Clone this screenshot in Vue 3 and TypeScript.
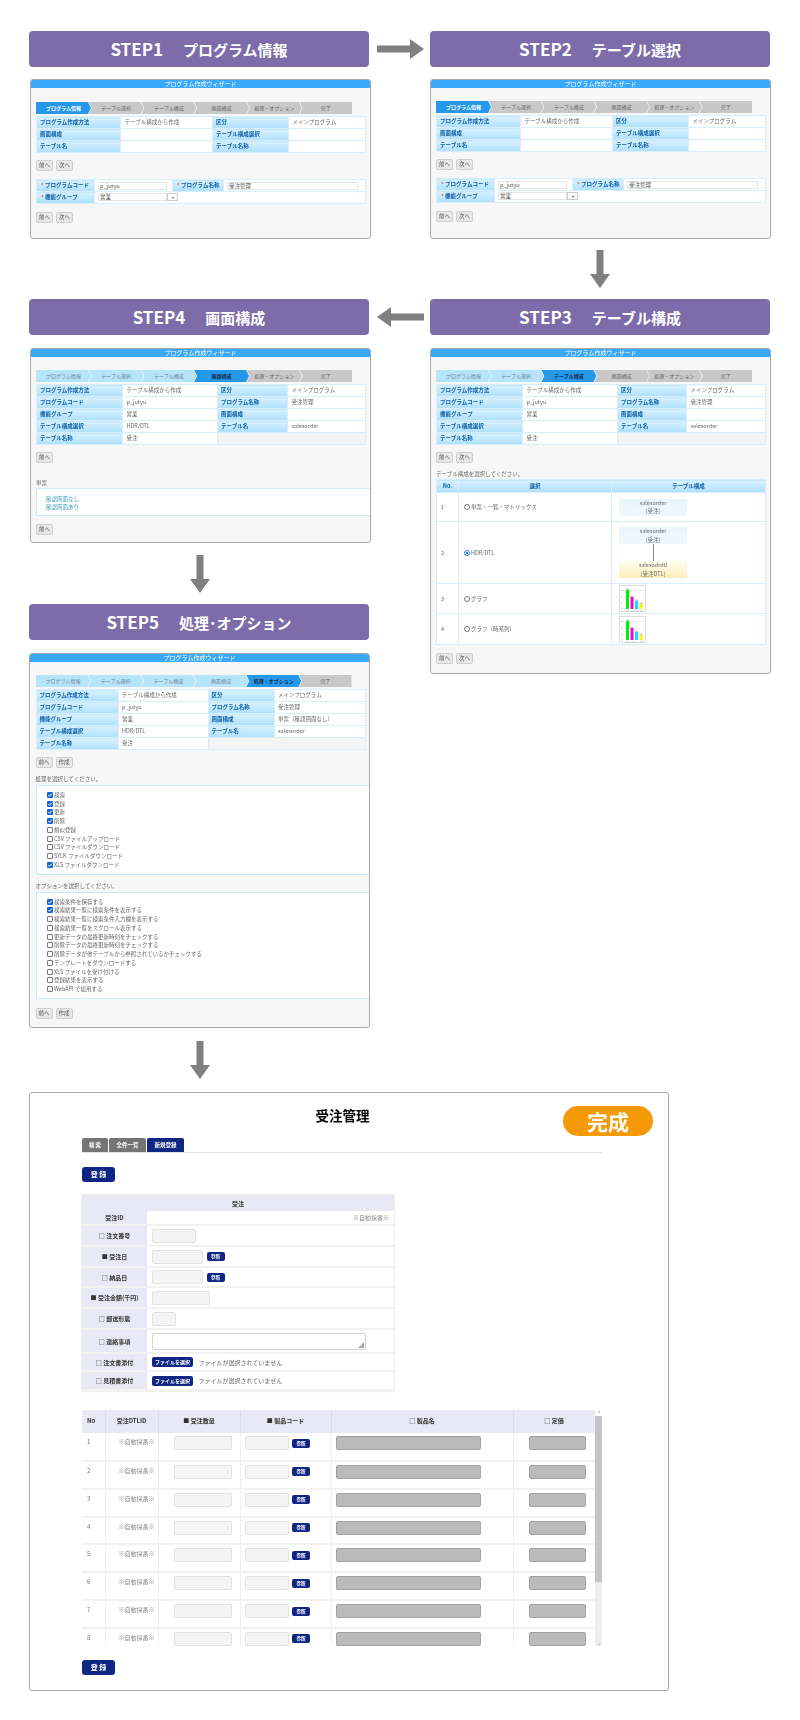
<script setup lang="ts">
interface Check { label: string; on: boolean }
interface Wizard {
  id: number
  heading: string
  current: number
  cols: number[]
  info: string[][]
  action: string
}

const stepNames = ['プログラム情報', 'テーブル選択', 'テーブル構成', '画面構成', '処理・オプション', '完了']

const early: string[][] = [
  ['プログラム作成方法', 'テーブル構成から作成', '区分', 'メインプログラム'],
  ['画面構成', '', 'テーブル構成選択', ''],
  ['テーブル名', '', 'テーブル名称', '']
]
const late = (screen: string, struct: string): string[][] => [
  ['プログラム作成方法', 'テーブル構成から作成', '区分', 'メインプログラム'],
  ['プログラムコード', 'p_jutyu', 'プログラム名称', '受注管理'],
  ['機能グループ', '営業', '画面構成', screen],
  ['テーブル構成選択', struct, 'テーブル名', 'salesorder'],
  ['テーブル名称', '受注']
]

const wizards: Wizard[] = [
  { id: 1, heading: 'プログラム情報', current: 0, cols: [84, 92, 76, 77], info: early, action: '次へ' },
  { id: 2, heading: 'テーブル選択', current: 0, cols: [84, 92, 76, 77], info: early, action: '次へ' },
  { id: 3, heading: 'テーブル構成', current: 2, cols: [86, 95, 69, 79], info: late('', ''), action: '次へ' },
  { id: 4, heading: '画面構成', current: 3, cols: [86, 95, 70, 78], info: late('', 'HDR/DTL'), action: '' },
  { id: 5, heading: '処理･オプション', current: 4, cols: [82, 90, 66, 91], info: late('単票（確認画面なし）', 'HDR/DTL'), action: '作成' }
]

const structures = [
  { no: 1, label: '単票・一覧・マトリックス', kind: 'single', on: false, h: 29 },
  { no: 2, label: 'HDR/DTL', kind: 'pair', on: true, h: 62 },
  { no: 3, label: 'グラフ', kind: 'graph', on: false, h: 30 },
  { no: 4, label: 'グラフ（時系列）', kind: 'graph', on: false, h: 31 }
]

const processes: Check[] = [
  { label: '検索', on: true },
  { label: '登録', on: true },
  { label: '更新', on: true },
  { label: '削除', on: true },
  { label: '類似登録', on: false },
  { label: 'CSV ファイルアップロード', on: false },
  { label: 'CSV ファイルダウンロード', on: false },
  { label: 'SYLK ファイルダウンロード', on: false },
  { label: 'XLS ファイルダウンロード', on: true }
]
const options: Check[] = [
  { label: '検索条件を保存する', on: true },
  { label: '検索結果一覧に検索条件を表示する', on: true },
  { label: '検索結果一覧に検索条件入力欄を表示する', on: false },
  { label: '検索結果一覧をスクロール表示する', on: false },
  { label: '更新データの最終更新時刻をチェックする', on: false },
  { label: '削除データの最終更新時刻をチェックする', on: false },
  { label: '削除データが他テーブルから参照されているかチェックする', on: false },
  { label: 'テンプレートをダウンロードする', on: false },
  { label: 'XLS ファイルを受け付ける', on: false },
  { label: '登録結果を表示する', on: false },
  { label: 'WebAPI で使用する', on: false }
]
const checkGroups = [
  { title: '処理を選択してください。', items: processes },
  { title: 'オプションを選択してください。', items: options }
]

const formRows = [
  { label: '受注ID', h: 14, kind: 'auto', input: 0 },
  { label: '□ 注文番号', h: 21, kind: 'input', input: 44 },
  { label: '■ 受注日', h: 21, kind: 'ref', input: 51 },
  { label: '□ 納品日', h: 20, kind: 'ref', input: 51 },
  { label: '■ 受注金額(千円)', h: 21, kind: 'input', input: 58 },
  { label: '□ 郵送形態', h: 21, kind: 'input', input: 24 },
  { label: '□ 連絡事項', h: 24, kind: 'area', input: 0 },
  { label: '□ 注文書添付', h: 18, kind: 'file', input: 0 },
  { label: '□ 見積書添付', h: 19, kind: 'file', input: 0 }
]

const detailCols = [23, 53, 82, 91, 182, 82]
const detailRows = [1, 2, 3, 4, 5, 6, 7, 8]
</script>

<template>
  <main class="page">
    <div class="flow">
      <section v-for="w in wizards" :key="w.id" class="sec" :class="`sec-${w.id}`">
        <h2 class="heading"><span class="heading-no">STEP{{ w.id }}</span>　{{ w.heading }}</h2>

        <div class="wizard">
          <div class="wizard-title">プログラム作成ウィザード</div>
          <div class="wizard-body">
            <ol class="crumbs">
              <li
                v-for="(name, i) in stepNames"
                :key="name"
                class="crumb"
                :class="{ done: i < w.current, now: i === w.current, first: i === 0, last: i === 5, white: w.current === 0 }"
              >{{ name }}</li>
            </ol>

            <table class="info">
              <colgroup><col v-for="(c, i) in w.cols" :key="i" :style="{ width: c + 'px' }" /></colgroup>
              <tbody>
                <tr v-for="(row, r) in w.info" :key="r">
                  <template v-for="(cell, c) in row" :key="c">
                    <th v-if="c % 2 === 0">{{ cell }}</th>
                    <td v-else>{{ cell }}</td>
                  </template>
                  <td v-if="row.length === 2" colspan="2" class="blank"></td>
                </tr>
              </tbody>
            </table>

            <div class="btns"><span class="btn">前へ</span><span v-if="w.action" class="btn">{{ w.action }}</span></div>

            <template v-if="w.id <= 2">
              <table class="info basics">
                <colgroup>
                  <col style="width: 58px" /><col style="width: 78px" /><col style="width: 51px" /><col style="width: 142px" />
                </colgroup>
                <tbody>
                  <tr>
                    <th><i>*</i> プログラムコード</th>
                    <td><span class="field short">p_jutyu</span></td>
                    <th><i>*</i> プログラム名称</th>
                    <td><span class="field wide">受注管理</span></td>
                  </tr>
                  <tr>
                    <th><i>*</i> 機能グループ</th>
                    <td colspan="3">
                      <span class="select"><span class="field short">営業</span><span class="select-btn">▾</span></span>
                    </td>
                  </tr>
                </tbody>
              </table>
              <div class="btns after"><span class="btn">前へ</span><span class="btn">次へ</span></div>
            </template>

            <template v-if="w.id === 3">
              <p class="prompt">テーブル構成を選択してください。</p>
              <table class="structs">
                <colgroup><col style="width: 22px" /><col style="width: 153px" /><col style="width: 154px" /></colgroup>
                <thead><tr><th>No.</th><th>選択</th><th>テーブル構成</th></tr></thead>
                <tbody>
                  <tr v-for="s in structures" :key="s.no" :style="{ height: s.h + 'px' }">
                    <td class="no">{{ s.no }}</td>
                    <td><span class="radio" :class="{ on: s.on }"></span>{{ s.label }}</td>
                    <td class="diagram">
                      <template v-if="s.kind !== 'graph'">
                        <div class="tbl">salesorder<br />[受注]</div>
                        <template v-if="s.kind === 'pair'">
                          <div class="link"></div>
                          <div class="tbl dtl">salesodrdtl<br />[受注DTL]</div>
                        </template>
                      </template>
                      <svg v-else class="thumb" viewBox="0 0 27 27" width="27" height="27">
                        <rect x="0.5" y="0.5" width="26" height="26" fill="#fff" stroke="#ddd" />
                        <path d="M5 5.5H25M5 12H25M5 18H25" stroke="#e6e6e6" stroke-width="0.6" />
                        <path d="M2 5.5H4M2 12H4M2 18H4M2 24H4M7 26H10M12 26H15M16 26H19M21 26H24" stroke="#bbb" stroke-width="0.8" />
                        <rect x="7" y="3.5" width="3" height="1.6" fill="#ccc" />
                        <rect x="7" y="5" width="3" height="19" fill="#00f000" />
                        <rect x="11.5" y="10.5" width="3" height="1.6" fill="#ccc" />
                        <rect x="11.5" y="12" width="3" height="12" fill="#f000e8" />
                        <rect x="16" y="14.5" width="3" height="1.6" fill="#ccc" />
                        <rect x="16" y="16" width="3" height="8" fill="#00e8f8" />
                        <rect x="20.5" y="17.5" width="3" height="1.6" fill="#ccc" />
                        <rect x="20.5" y="19" width="3" height="5" fill="#f8f800" />
                      </svg>
                    </td>
                  </tr>
                </tbody>
              </table>
              <div class="btns after"><span class="btn">前へ</span><span class="btn">次へ</span></div>
            </template>

            <template v-if="w.id === 4">
              <p class="prompt far">単票</p>
              <div class="choices links">
                <a>確認画面なし</a>
                <a>確認画面あり</a>
              </div>
              <div class="btns after"><span class="btn">前へ</span></div>
            </template>

            <template v-if="w.id === 5">
              <template v-for="g in checkGroups" :key="g.title">
                <p class="prompt">{{ g.title }}</p>
                <ul class="choices checks">
                  <li v-for="item in g.items" :key="item.label">
                    <span class="check" :class="{ on: item.on }">
                      <svg v-if="item.on" viewBox="0 0 6 6" width="6" height="6"><path d="M1.3 3.1 2.5 4.3 4.8 1.7" fill="none" stroke="#fff" stroke-width="1" /></svg>
                    </span>{{ item.label }}
                  </li>
                </ul>
              </template>
              <div class="btns after"><span class="btn">前へ</span><span class="btn">作成</span></div>
            </template>
          </div>
        </div>
      </section>

      <div class="arrow a-right">
        <svg width="47" height="20" viewBox="0 0 47 20"><path d="M0 6.5H33V0L47 10 33 20V13.5H0Z" fill="#808080" /></svg>
      </div>
      <div class="arrow a-down-1">
        <svg width="20" height="38" viewBox="0 0 20 38"><path d="M6.5 0H13.5V24H20L10 38 0 24H6.5Z" fill="#808080" /></svg>
      </div>
      <div class="arrow a-left">
        <svg width="47" height="20" viewBox="0 0 47 20"><path d="M47 6.5H14V0L0 10 14 20V13.5H47Z" fill="#808080" /></svg>
      </div>
      <div class="arrow a-down-2">
        <svg width="20" height="38" viewBox="0 0 20 38"><path d="M6.5 0H13.5V24H20L10 38 0 24H6.5Z" fill="#808080" /></svg>
      </div>
      <div class="arrow a-down-3">
        <svg width="20" height="38" viewBox="0 0 20 38"><path d="M6.5 0H13.5V24H20L10 38 0 24H6.5Z" fill="#808080" /></svg>
      </div>
    </div>

    <section class="result">
      <div class="badge">完成</div>
      <h1 class="result-title">受注管理</h1>
      <nav class="tabs">
        <span class="tab tab-a">検 索</span>
        <span class="tab tab-b">全件一覧</span>
        <span class="tab tab-c active">新規登録</span>
      </nav>
      <span class="primary">登 録</span>

      <table class="form">
        <colgroup><col style="width: 65px" /><col /></colgroup>
        <thead><tr><th colspan="2">受注</th></tr></thead>
        <tbody>
          <tr v-for="f in formRows" :key="f.label" :style="{ height: f.h + 'px' }">
            <th>{{ f.label }}</th>
            <td>
              <div v-if="f.kind === 'auto'" class="auto">※自動採番※</div>
              <div v-else-if="f.kind === 'input' || f.kind === 'ref'" class="cell-row">
                <span class="inp" :style="{ width: f.input + 'px' }"></span>
                <span v-if="f.kind === 'ref'" class="ref">参照</span>
              </div>
              <div v-else-if="f.kind === 'area'" class="area">
                <svg viewBox="0 0 6 6" width="6" height="6"><path d="M6 0V6H0Z" fill="#aaa" /></svg>
              </div>
              <div v-else class="cell-row">
                <span class="file">ファイルを選択</span>
                <span class="file-note">ファイルが選択されていません</span>
              </div>
            </td>
          </tr>
        </tbody>
      </table>

      <div class="detail">
        <div class="detail-clip">
          <table class="lines">
            <colgroup><col v-for="(c, i) in detailCols" :key="i" :style="{ width: c + 'px' }" /></colgroup>
            <thead>
              <tr>
                <th class="th-no">No</th><th>受注DTLID</th><th>■ 受注数量</th><th>■ 製品コード</th><th>□ 製品名</th><th>□ 定価</th>
              </tr>
            </thead>
            <tbody>
              <tr v-for="n in detailRows" :key="n">
                <td class="td-no">{{ n }}</td>
                <td class="td-auto">※自動採番※</td>
                <td class="td-end"><span class="inp qty"></span></td>
                <td><div class="cell-row"><span class="inp code"></span><span class="ref">参照</span></div></td>
                <td><span class="inp locked name"></span></td>
                <td class="td-end price"><span class="inp locked cost"></span></td>
              </tr>
            </tbody>
          </table>
        </div>
        <div class="scrollbar">
          <span class="sb-arrow">⌃</span>
          <span class="sb-thumb"></span>
          <span class="sb-arrow down">⌄</span>
        </div>
      </div>

      <span class="primary last">登 録</span>
    </section>
  </main>
</template>

<style scoped>
.page {
  width: 800px;
  height: 1720px;
  box-sizing: border-box;
  padding: 31px 0 0 29px;
  background: #fff;
  font-family: "Noto Sans CJK JP", "Noto Sans", sans-serif;
  color: #666;
  overflow: hidden;
}
.flow {
  display: grid;
  grid-template-columns: 341px 60px 341px;
  grid-template-rows: 208px 60px 244px 61px 424px 64px;
}
.sec-1 { grid-area: 1 / 1; }
.sec-2 { grid-area: 1 / 3; }
.sec-3 { grid-area: 3 / 3 / 6 / 4; }
.sec-4 { grid-area: 3 / 1; }
.sec-5 { grid-area: 5 / 1; }
.arrow { display: flex; align-items: center; justify-content: center; }
.arrow svg { display: block; }
.a-right { grid-area: 1 / 2; height: 36px; }
.a-down-1 { grid-area: 2 / 3; padding-right: 2px; }
.a-left { grid-area: 3 / 2; height: 36px; }
.a-down-2 { grid-area: 4 / 1; }
.a-down-3 { grid-area: 6 / 1; }

.heading {
  margin: 0 0 12px;
  width: 340px;
  height: 36px;
  border-radius: 4px;
  background: #7d6ca9;
  color: #fff;
  font-size: 15px;
  font-weight: 700;
  line-height: 36px;
  text-align: center;
}
.sec-3 .heading, .sec-4 .heading, .sec-5 .heading { margin-bottom: 13px; }
.heading-no { margin-right: 5px; font-size: 17px; }

.wizard {
  margin-left: 1px;
  width: 341px;
  box-sizing: border-box;
  border: 1px solid #a8a8a8;
  border-radius: 3px;
  background: #f7f7f7;
  overflow: hidden;
  filter: blur(0.3px);
}
.sec-3 .wizard, .sec-2 .wizard, .sec-5 .wizard { margin-left: 0; }
.wizard-title {
  height: 8px;
  background: #3aa9fc;
  color: #fff;
  font-size: 6px;
  line-height: 8px;
  text-align: center;
}
.wizard-body { padding: 13px 5px 7px; }
.sec-1 .wizard-body { padding-top: 14px; padding-bottom: 15px; }
.sec-2 .wizard-body { padding-bottom: 16px; }
.sec-3 .wizard-body { padding-bottom: 9px; }
.sec-5 .wizard-body { padding-left: 5.5px; padding-bottom: 8px; }

.crumbs {
  display: flex;
  margin: 0;
  padding: 0;
  list-style: none;
  height: 12px;
}
.crumb {
  flex: none;
  width: 55px;
  margin-right: -2.3px;
  background: #c8c8c8;
  color: #666;
  font-size: 5px;
  line-height: 12px;
  text-align: center;
  clip-path: polygon(0 0, calc(100% - 3px) 0, 100% 50%, calc(100% - 3px) 100%, 0 100%, 3px 50%);
}
.crumb.first { clip-path: polygon(0 0, calc(100% - 3px) 0, 100% 50%, calc(100% - 3px) 100%, 0 100%); }
.crumb.last { width: 52.5px; clip-path: polygon(0 0, 100% 0, 100% 100%, 0 100%, 3px 50%); }
.crumb.done { background: #b6e4fb; color: #6f8591; }
.crumb.now { background: #2598ea; color: #13294b; font-weight: 700; }
.crumb.now.white { color: #fff; }

.info {
  margin-top: 2px;
  width: 329px;
  table-layout: fixed;
  border-collapse: collapse;
  font-size: 5.5px;
  line-height: 11px;
}
.info tr { height: 12px; }
.info th, .info td {
  padding: 0 0 0 3px;
  border: 1px solid #d8eefa;
  overflow: hidden;
  white-space: nowrap;
}
.info th {
  background: linear-gradient(#d8f1ff, #aee0fb);
  color: #0b5fa8;
  font-weight: 700;
  text-align: left;
}
.info td { padding-left: 3.5px; background: #fff; color: #666; }
.info td.blank { background: #f4f4f4; }
.basics { margin-top: 8px; }
.basics th { padding-left: 4px; }
.basics th i { color: #e8622a; font-style: normal; }
.basics td { padding: 0 0 0 3px; }
.field {
  display: inline-block;
  box-sizing: border-box;
  height: 8px;
  border: 1px solid #e4e4e4;
  background: #fff;
  color: #555;
  font-size: 5.5px;
  line-height: 6px;
  padding-left: 1px;
  vertical-align: middle;
}
.field.short { width: 69px; }
.field.wide { width: 131px; }
.select { display: inline-flex; align-items: center; }
.select-btn {
  width: 11px;
  height: 8px;
  box-sizing: border-box;
  border: 1px solid #ccc;
  background: #fff;
  color: #555;
  font-size: 4px;
  line-height: 6px;
  text-align: center;
}

.btns { display: flex; gap: 3px; margin-top: 7px; }
.btns.after { margin-top: 8px; }
.sec-5 .btns.after { margin-top: 9px; }
.btn {
  box-sizing: border-box;
  width: 17px;
  height: 11px;
  border: 1px solid #cfcfcf;
  border-radius: 2px;
  background: #e8e8e8;
  color: #555;
  font-size: 5.5px;
  line-height: 9px;
  text-align: center;
}

.prompt {
  margin: 7px 0 0;
  height: 9px;
  font-size: 5.5px;
  line-height: 9px;
  color: #666;
}
.prompt.far { margin-top: 16px; }
.structs {
  width: 329px;
  table-layout: fixed;
  border-collapse: collapse;
  background: #fff;
  font-size: 5.5px;
}
.structs th, .structs td { border: 1px solid #d8eefa; padding: 0; }
.structs th {
  height: 12px;
  background: linear-gradient(#d8f1ff, #aee0fb);
  color: #0b5fa8;
  line-height: 11px;
}
.structs td { padding-left: 5px; color: #666; }
.structs td.no { padding-left: 4px; }
.structs td.diagram { padding: 1px 0 1px 7px; vertical-align: middle; }
.radio {
  display: inline-block;
  box-sizing: border-box;
  width: 6px;
  height: 6px;
  margin-right: 1px;
  border: 1px solid #777;
  border-radius: 50%;
  background: #fff;
  vertical-align: -1px;
}
.radio.on { border: 1.5px solid #2b7de0; background: radial-gradient(#2b7de0 35%, #fff 40%); }
.tbl {
  width: 68px;
  height: 17px;
  background: linear-gradient(#e8f5fd, #f0f8fe);
  color: #666;
  font-size: 5.5px;
  line-height: 8.5px;
  text-align: center;
}
.tbl.dtl { background: linear-gradient(#fffdf0, #fdeeb8); }
.link { width: 1px; height: 17px; margin-left: 33.5px; background: #888; }
.thumb { display: block; }

.choices {
  margin: 0 -6px 0 0;
  box-sizing: border-box;
  border: 1px solid #c8eafa;
  border-right: none;
  background: #fff;
  list-style: none;
}
.links { height: 28px; padding: 6px 0 0 9px; }
.links a { display: block; height: 8px; color: #3c9ab5; font-size: 5.5px; line-height: 8px; }
.checks { margin-top: 1px; padding: 4.5px 0 4.5px 10.5px; }
.checks li {
  display: flex;
  align-items: center;
  height: 8.75px;
  color: #666;
  font-size: 5.5px;
  white-space: nowrap;
}
.check {
  flex: none;
  box-sizing: border-box;
  width: 6px;
  height: 6px;
  margin-right: 1px;
  border: 0.8px solid #777;
  border-radius: 1px;
  background: #fff;
  overflow: hidden;
}
.check.on { border: none; background: #1668d0; }
.check svg { display: block; }

.result {
  position: relative;
  box-sizing: border-box;
  width: 640px;
  height: 599px;
  padding: 14px 0 0 52px;
  border: 1px solid #a8a8a8;
  border-radius: 3px;
  background: #fff;
  filter: blur(0.25px);
}
.badge {
  position: absolute;
  top: 13px;
  right: 15px;
  width: 90px;
  height: 30px;
  border-radius: 15px;
  background: #f59a06;
  color: #fff;
  font-size: 21px;
  font-weight: 700;
  line-height: 30px;
  text-align: center;
}
.result-title {
  margin: 0;
  width: 521px;
  height: 16px;
  color: #000;
  font-size: 13.5px;
  font-weight: 700;
  line-height: 16px;
  text-align: center;
}
.tabs {
  display: flex;
  gap: 1px;
  box-sizing: border-box;
  width: 521px;
  height: 15px;
  margin-top: 15px;
  border-bottom: 1px solid #e2e2e2;
}
.tab {
  height: 14px;
  border-radius: 2px 2px 0 0;
  background: #757575;
  color: #fff;
  font-size: 5.5px;
  font-weight: 700;
  line-height: 14px;
  text-align: center;
}
.tab-a { width: 26px; }
.tab-b { width: 37px; }
.tab-c { width: 37px; }
.tab.active { background: #0f2783; }
.primary {
  display: block;
  width: 33px;
  height: 15px;
  margin-top: 14px;
  border-radius: 3px;
  background: #0f2783;
  color: #fff;
  font-size: 7px;
  font-weight: 700;
  line-height: 15px;
  text-align: center;
}
.primary.last { margin-top: 14px; }

.form {
  width: 312px;
  margin-top: 13px;
  table-layout: fixed;
  border-collapse: collapse;
  box-shadow: 0 0 2px #ccc;
  font-size: 6px;
  color: #333;
}
.form thead th {
  height: 16px;
  padding: 0;
  background: #e9e9f5;
  font-weight: 700;
  text-align: center;
}
.form tbody th {
  padding: 0;
  background: #e9e9f5;
  border-bottom: 2px solid #f2f2f2;
  font-weight: 700;
  text-align: center;
}
.form tbody td {
  padding: 0 5px;
  border-bottom: 2px solid #f2f2f2;
}
.auto { color: #888; text-align: right; }
.cell-row { display: flex; align-items: center; gap: 3.5px; }
.inp {
  display: block;
  box-sizing: border-box;
  flex: none;
  height: 14px;
  border: 1px solid #e2e2e2;
  border-radius: 2px;
  background: #f4f4f4;
}
.ref {
  flex: none;
  width: 18px;
  height: 9px;
  border-radius: 2px;
  background: #0f2783;
  color: #fff;
  font-size: 4.5px;
  font-weight: 700;
  line-height: 9px;
  text-align: center;
}
.area {
  position: relative;
  box-sizing: border-box;
  width: 214px;
  height: 17px;
  border: 1px solid #d4d4d4;
  border-radius: 2px;
  background: #fff;
}
.area svg { position: absolute; right: 1px; bottom: 1px; }
.file {
  flex: none;
  width: 41px;
  height: 10px;
  border-radius: 2px;
  background: #0f2783;
  color: #fff;
  font-size: 5px;
  font-weight: 700;
  line-height: 10px;
  text-align: center;
}
.file-note { margin-left: 2px; color: #666; font-size: 6px; }

.detail { display: flex; width: 520px; height: 236px; margin-top: 19px; }
.detail-clip { width: 513px; height: 236px; overflow: hidden; }
.lines {
  width: 513px;
  table-layout: fixed;
  border-collapse: collapse;
  font-size: 6px;
  color: #333;
}
.lines th {
  height: 23px;
  padding: 0 0 3px;
  box-sizing: border-box;
  background: #e9e9f5;
  border-right: 1px solid #dcdce8;
  font-weight: 700;
  text-align: center;
}
.lines .th-no { padding-left: 5px; text-align: left; }
.lines td {
  height: 27.85px;
  box-sizing: border-box;
  padding: 3px 0 0 4px;
  border-right: 1px solid #efefef;
  border-bottom: 2px solid #f2f2f2;
  vertical-align: top;
}
.lines td.td-no { padding: 4px 0 0 5px; color: #777; }
.lines td.td-auto { padding: 4px 3px 0 0; color: #888; text-align: right; }
.lines td.td-end { padding: 3px 8px 0 0; }
.lines td.price { padding-right: 9px; }
.td-end .inp { margin-left: auto; }
.qty { width: 58px; }
.code { width: 44px; }
.locked { background: #bbb; border-color: #a2a2a2; }
.name { width: 145px; }
.cost { width: 57px; }

.scrollbar {
  display: flex;
  flex-direction: column;
  width: 7px;
  background: #eee;
}
.sb-arrow {
  height: 6px;
  color: #666;
  font-size: 5px;
  line-height: 6px;
  text-align: center;
  background: #fff;
}
.sb-arrow.down { background: #eee; margin-top: auto; }
.sb-thumb { width: 7px; height: 166px; background: #c4c4c4; }
</style>

<style>
html, body { background: #fff; }
</style>
